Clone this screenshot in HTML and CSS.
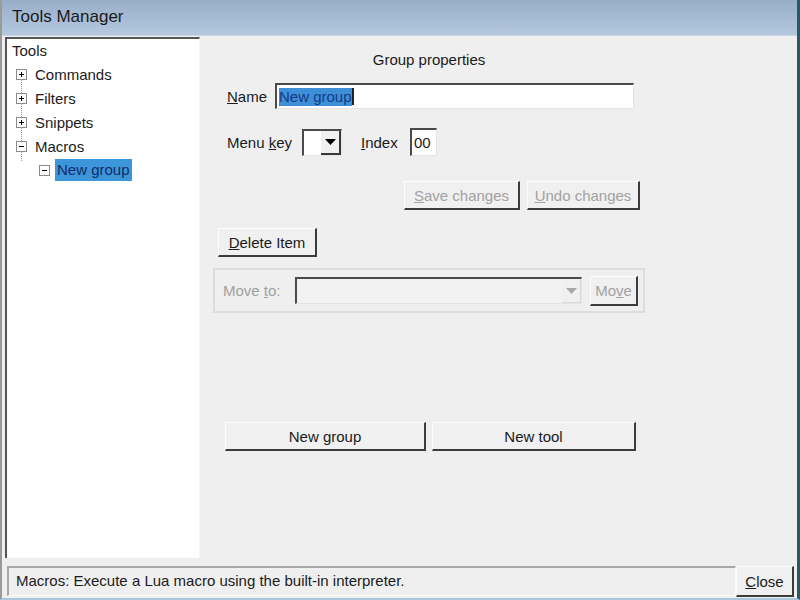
FILE: index.html
```html
<!DOCTYPE html>
<html lang="en">
<head>
  <meta charset="UTF-8">
  <title>Tools Manager</title>
  <link rel="stylesheet" href="styles.css">
</head>
<body>
  <div class="window">
    <div class="titlebar">Tools Manager</div>

    <div class="main">
      <div class="tree">
        <div class="node root">Tools</div>
        <div class="branch">
          <div class="node">
            <span class="box"><svg width="9" height="9" viewBox="0 0 9 9"><path d="M2 4.5h5M4.5 2v5" stroke="#000" stroke-width="1"/></svg></span>
            <span class="label">Commands</span>
          </div>
          <div class="node">
            <span class="box"><svg width="9" height="9" viewBox="0 0 9 9"><path d="M2 4.5h5M4.5 2v5" stroke="#000" stroke-width="1"/></svg></span>
            <span class="label">Filters</span>
          </div>
          <div class="node">
            <span class="box"><svg width="9" height="9" viewBox="0 0 9 9"><path d="M2 4.5h5M4.5 2v5" stroke="#000" stroke-width="1"/></svg></span>
            <span class="label">Snippets</span>
          </div>
          <div class="node">
            <span class="box"><svg width="9" height="9" viewBox="0 0 9 9"><path d="M2 4.5h5" stroke="#000" stroke-width="1"/></svg></span>
            <span class="label">Macros</span>
          </div>
          <div class="node child">
            <span class="box"><svg width="9" height="9" viewBox="0 0 9 9"><path d="M2 4.5h5" stroke="#000" stroke-width="1"/></svg></span>
            <span class="label selected">New group</span>
          </div>
        </div>
      </div>

      <div class="panel">
        <div class="content">
          <div class="heading">Group properties</div>

          <div class="row name-row">
            <span class="field-label"><u>N</u>ame</span>
            <div class="textbox wide"><span class="sel">New group</span><span class="caret"></span></div>
          </div>

          <div class="row key-row">
            <span class="field-label"><span>Menu <u>k</u>ey</span></span>
            <div class="combo small">
              <div class="combo-field"></div>
              <div class="combo-btn"><svg width="11" height="6" viewBox="0 0 11 6"><path d="M0 0h11L5.5 6z" fill="#000"/></svg></div>
            </div>
            <span class="field-label index-label"><u>I</u>ndex</span>
            <div class="textbox index">00</div>
          </div>

          <div class="row save-row">
            <button class="btn disabled save"><u>S</u>ave changes</button>
            <button class="btn disabled undo"><u>U</u>ndo changes</button>
          </div>

          <div class="row">
            <button class="btn delete"><u>D</u>elete Item</button>
          </div>

          <div class="movebox">
            <span class="field-label muted">Move <u>t</u>o:</span>
            <div class="combo target">
              <div class="combo-field"></div>
              <div class="combo-btn flat"><svg width="11" height="6" viewBox="0 0 11 6"><path d="M0 0h11L5.5 6z" fill="#a8a8a8"/></svg></div>
            </div>
            <button class="btn disabled move">Mo<u>v</u>e</button>
          </div>

          <div class="row new-row">
            <button class="btn wide-btn">New group</button>
            <button class="btn wide-btn tool">New tool</button>
          </div>
        </div>
      </div>
    </div>

    <div class="statusbar">
      <div class="status">Macros: Execute a Lua macro using the built-in interpreter.</div>
      <button class="btn close"><u>C</u>lose</button>
    </div>
  </div>
</body>
</html>
```

FILE: styles.css
```css
html, body {
  margin: 0;
  padding: 0;
}
body {
  width: 800px;
  height: 600px;
  overflow: hidden;
  font-family: "Liberation Sans", Arial, sans-serif;
  font-size: 15px;
  color: #1b1b1b;
  background: #efefef;
}
.window {
  box-sizing: border-box;
  width: 800px;
  height: 600px;
  display: flex;
  flex-direction: column;
  border-left: 2px solid #9a9a9a;
  border-right: 3px solid #2f5664;
  border-bottom: 2px solid #a9c7dd;
  background: #efefef;
}
.titlebar {
  height: 36px;
  box-sizing: border-box;
  padding: 7px 0 0 10px;
  font-size: 17px;
  color: #1a1a1a;
  background: linear-gradient(#98aec7, #b4c9e0);
  border-bottom: 1px solid #c9d8e8;
}
.main {
  height: 521px;
  margin-top: 1px;
  display: flex;
}

/* tree view */
.tree {
  box-sizing: border-box;
  width: 195px;
  margin-left: 3px;
  background: #fff;
  border-top: 2px solid #555;
  border-left: 2px solid #555;
  border-right: 1px solid #f6f6f6;
  padding-left: 5px;
}
.node {
  box-sizing: border-box;
  height: 24px;
  padding-bottom: 2px;
  display: flex;
  align-items: center;
}
.branch {
  background-image: repeating-linear-gradient(#9a9a9a 0 1px, transparent 1px 2px);
  background-size: 1px 88px;
  background-position: 9px 11px;
  background-repeat: no-repeat;
}
.box {
  box-sizing: border-box;
  width: 11px;
  height: 11px;
  border: 1px solid #8a8a8a;
  background: #fff;
  margin-left: 4px;
  margin-right: 8px;
  display: flex;
  align-items: center;
  justify-content: center;
}
.box svg {
  display: block;
}
.node.child {
  padding-left: 23px;
}
.node.child .box {
  margin-right: 5px;
}
.label.selected {
  background: #3d95da;
  color: #0f2d68;
  padding: 2px 2px;
  line-height: 18px;
}

/* right panel */
.panel {
  flex: 1;
  padding-left: 13px;
}
.content {
  width: 432px;
}
.heading {
  margin-top: 14px;
  line-height: 18px;
  text-align: center;
}
.row {
  display: flex;
  align-items: center;
}
.field-label {
  white-space: nowrap;
}
.name-row {
  margin-top: 14px;
  padding-left: 14px;
}
.name-row .field-label {
  width: 48px;
}
.textbox {
  box-sizing: border-box;
  background: #fff;
  border-top: 2px solid #4a4a4a;
  border-left: 2px solid #4a4a4a;
  border-right: 1px solid #e4e4e4;
  border-bottom: 1px solid #e4e4e4;
  display: flex;
  align-items: center;
  padding-left: 2px;
}
.textbox.wide {
  width: 359px;
  height: 26px;
}
.sel {
  background: #3d8fd8;
  color: #163a86;
  line-height: 18px;
}
.caret {
  width: 2px;
  height: 17px;
  background: #222;
}
.key-row {
  margin-top: 19px;
  padding-left: 14px;
}
.key-row .field-label {
  width: 75px;
}
.key-row .index-label {
  width: 49px;
  margin-left: 19px;
}
.combo {
  box-sizing: border-box;
  display: flex;
  border-top: 2px solid #4a4a4a;
  border-left: 2px solid #4a4a4a;
  border-right: 1px solid #e4e4e4;
  border-bottom: 1px solid #e4e4e4;
}
.combo.small {
  width: 40px;
  height: 27px;
  background: #fff;
}
.combo-field {
  flex: 1;
}
.combo-btn {
  width: 18px;
  display: flex;
  align-items: center;
  justify-content: center;
  background: #f0f0f0;
  border-right: 2px solid #3a3a3a;
  border-bottom: 2px solid #3a3a3a;
}
.textbox.index {
  width: 27px;
  height: 28px;
}
.save-row {
  margin-top: 25px;
  justify-content: flex-end;
  padding-right: 5px;
}
.btn {
  box-sizing: border-box;
  height: 29px;
  font: inherit;
  color: #1b1b1b;
  background: #f0f0f0;
  border-top: 1px solid #fdfdfd;
  border-left: 1px solid #fdfdfd;
  border-right: 2px solid #3c3c3c;
  border-bottom: 2px solid #3c3c3c;
  padding: 0;
}
.btn.disabled {
  color: #a2a2a2;
}
.btn.save {
  width: 116px;
}
.btn.undo {
  width: 113px;
  margin-left: 7px;
}
.btn.delete {
  width: 99px;
  margin-top: 18px;
  margin-left: 5px;
}
.movebox {
  box-sizing: border-box;
  height: 45px;
  margin-top: 11px;
  border: 2px solid #dcdcdc;
  display: flex;
  align-items: center;
  padding-left: 8px;
}
.muted {
  color: #a0a0a0;
  width: 72px;
}
.combo.target {
  width: 287px;
  height: 27px;
  background: #f2f2f2;
}
.combo-btn.flat {
  border-right: 1px solid #d8d8d8;
  border-bottom: 1px solid #d8d8d8;
}
.btn.move {
  width: 48px;
  height: 30px;
  margin-left: 8px;
}
.new-row {
  margin-top: 109px;
  padding-left: 12px;
}
.btn.wide-btn {
  width: 201px;
}
.btn.tool {
  width: 204px;
  margin-left: 6px;
}

/* status bar */
.statusbar {
  flex: 1;
  display: flex;
  align-items: flex-end;
  padding: 0 3px 1px 5px;
}
.status {
  box-sizing: border-box;
  width: 730px;
  height: 30px;
  line-height: 26px;
  padding-left: 7px;
  border-top: 2px solid #a8a8a8;
  border-left: 2px solid #a8a8a8;
  border-right: 1px solid #fafafa;
  border-bottom: 1px solid #fafafa;
  margin-bottom: 1px;
}
.btn.close {
  width: 58px;
  height: 31px;
}
```
